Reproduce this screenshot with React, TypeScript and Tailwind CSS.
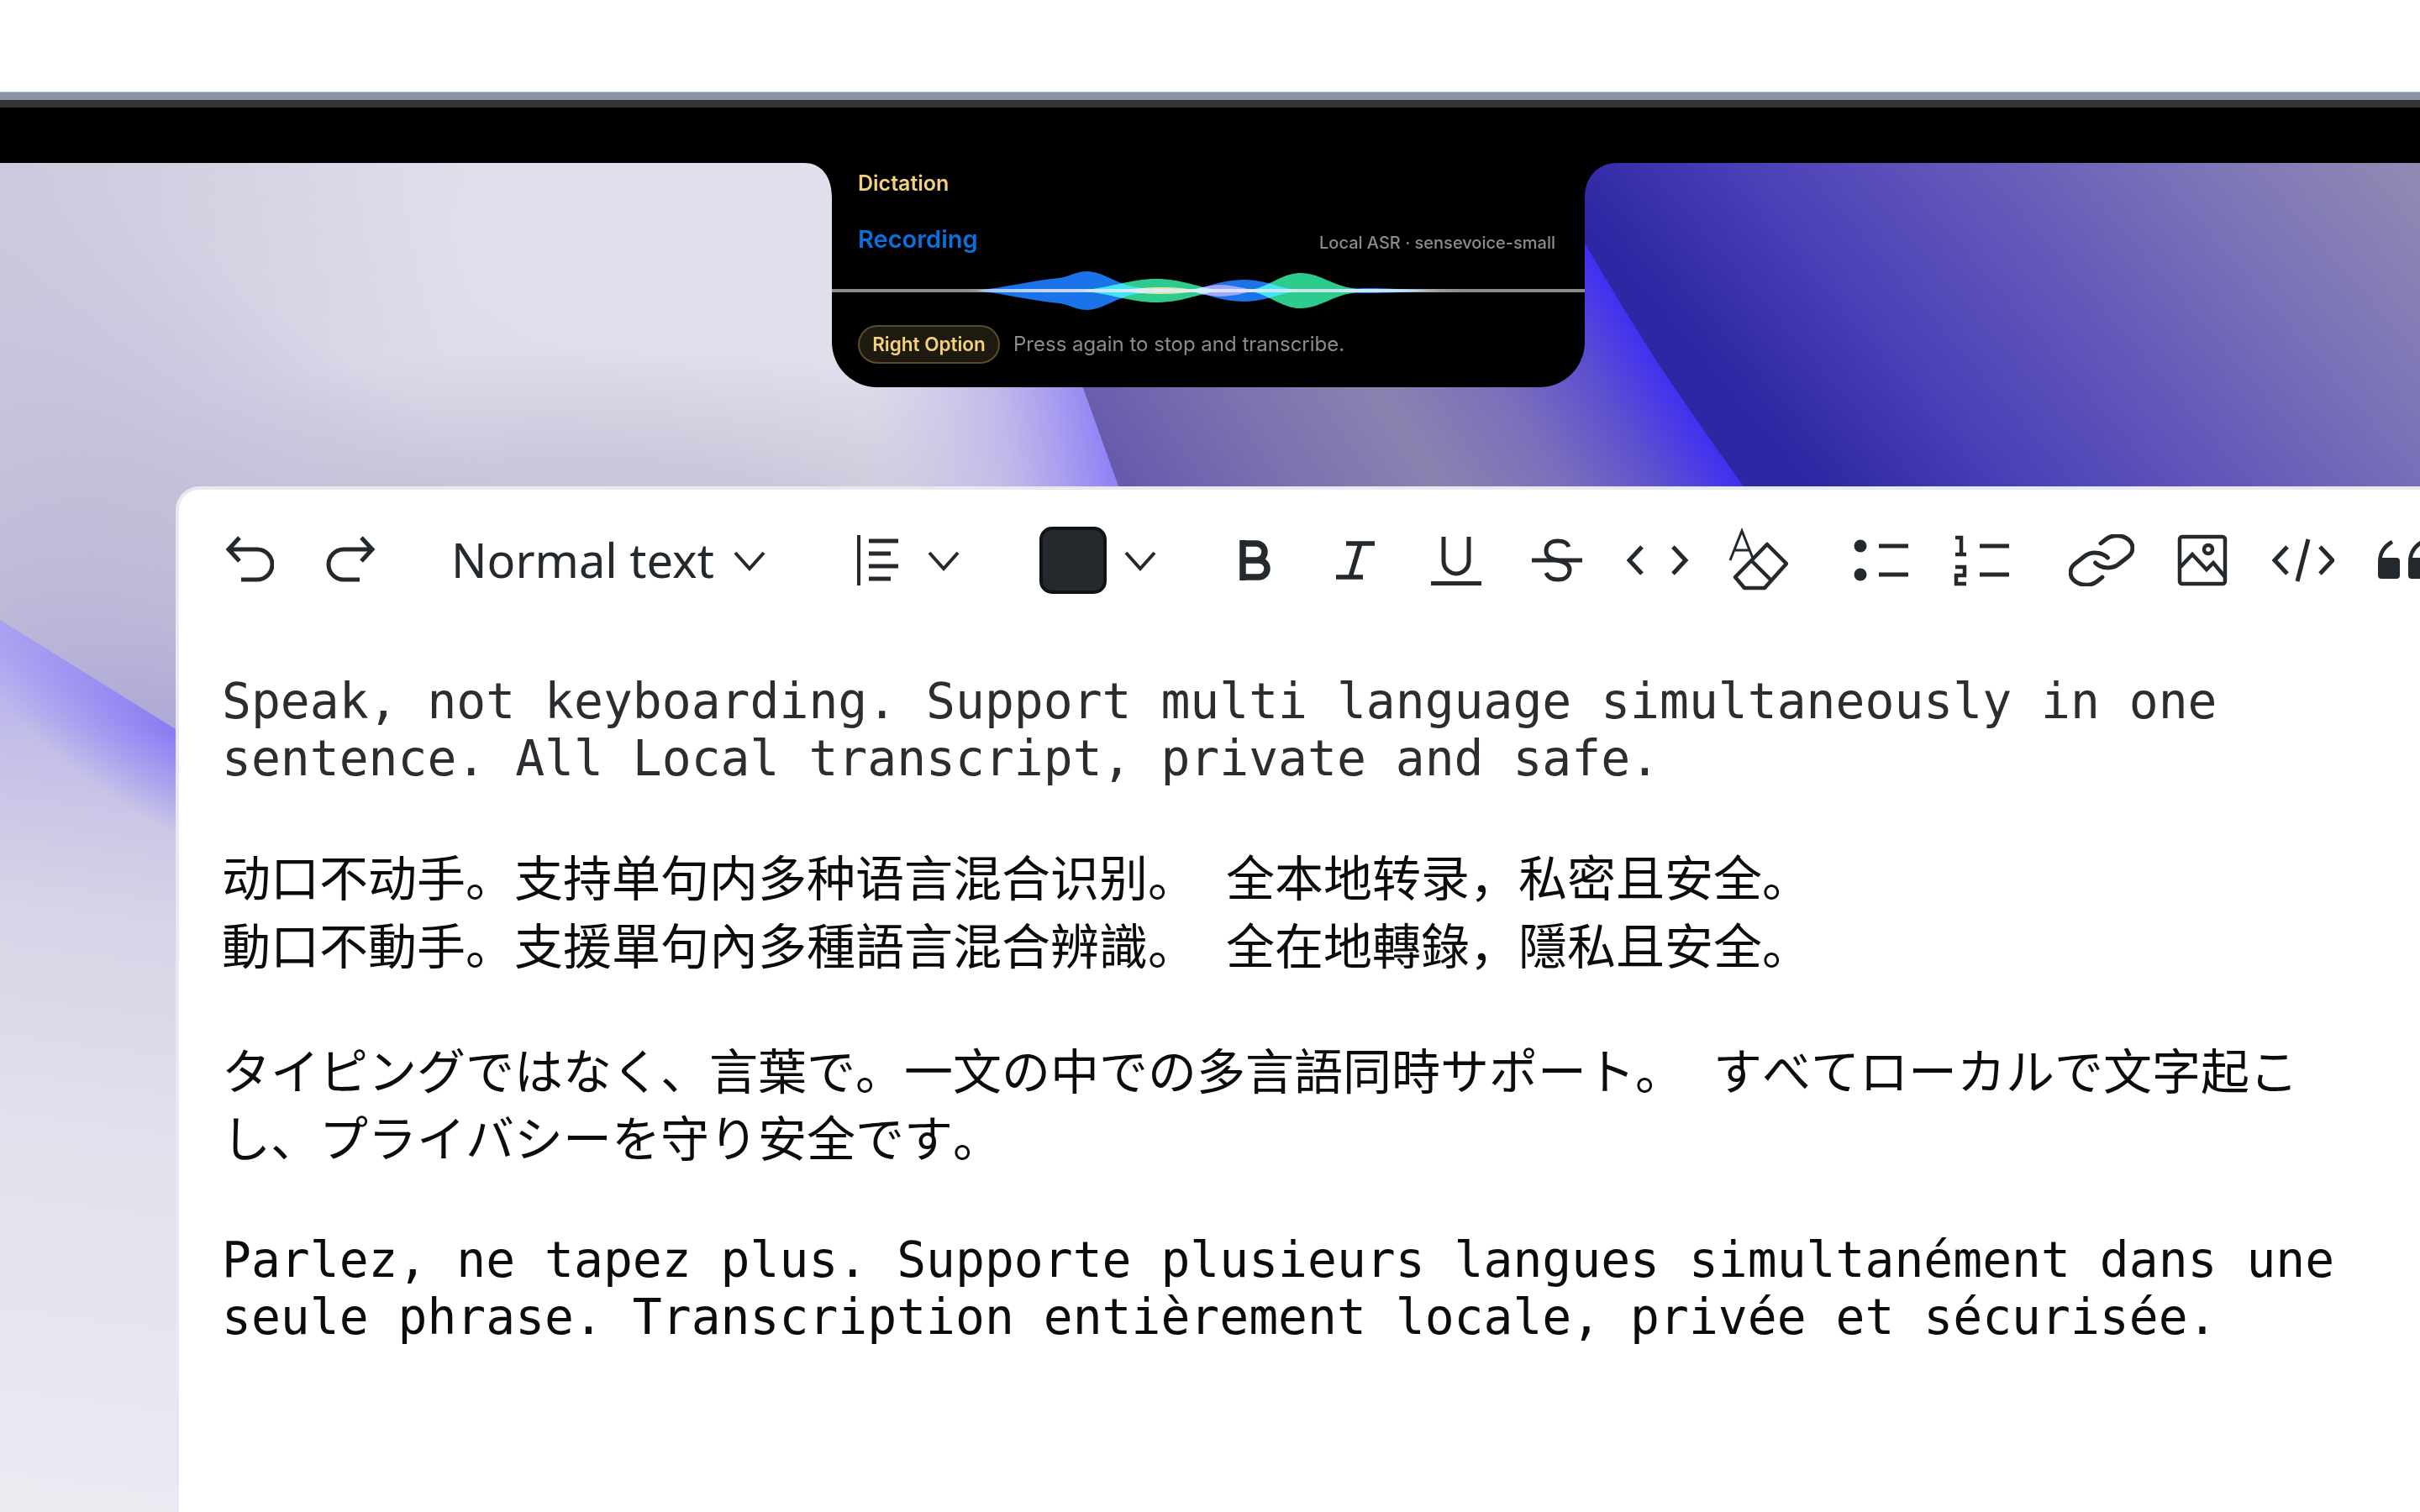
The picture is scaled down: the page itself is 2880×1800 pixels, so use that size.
import React from "react";

const ink = "#24292e";

const Chevron = ({ className = "" }: { className?: string }) => (
  <svg width="38" height="80" viewBox="0 0 38 80" fill="none" stroke={ink} strokeWidth="4" className={className}>
    <path d="M2 31 L19 50 L36 31" />
  </svg>
);

const Wallpaper = () => (
  <svg className="absolute left-0 top-0" width="2880" height="1606" viewBox="0 194 2880 1606">
    <defs>
      <linearGradient id="lilac" gradientUnits="userSpaceOnUse" x1="100" y1="850" x2="520" y2="250">
        <stop offset="0" stopColor="#9a94d0" />
        <stop offset="0.3" stopColor="#b6b1d8" />
        <stop offset="0.72" stopColor="#dcdaea" />
        <stop offset="1" stopColor="#e1dfec" />
      </linearGradient>
      <linearGradient id="lilacTop" gradientUnits="userSpaceOnUse" x1="0" y1="194" x2="560" y2="340">
        <stop offset="0" stopColor="#cbc7dc" stopOpacity="0.9" />
        <stop offset="1" stopColor="#cbc7dc" stopOpacity="0" />
      </linearGradient>
      <radialGradient id="lilacShade" gradientUnits="userSpaceOnUse" cx="0" cy="0" r="1" gradientTransform="translate(720 660) scale(720 250)">
        <stop offset="0" stopColor="#c4c1d6" stopOpacity="0.95" />
        <stop offset="0.45" stopColor="#c4c1d6" stopOpacity="0.75" />
        <stop offset="1" stopColor="#c4c1d6" stopOpacity="0" />
      </radialGradient>
      <linearGradient id="rim" gradientUnits="userSpaceOnUse" x1="1040" y1="560" x2="1330" y2="510">
        <stop offset="0" stopColor="#c8c3e6" stopOpacity="0" />
        <stop offset="0.55" stopColor="#bcb4ea" stopOpacity="0.9" />
        <stop offset="1" stopColor="#8a7bf7" />
      </linearGradient>
      <linearGradient id="lower" gradientUnits="userSpaceOnUse" x1="60" y1="750" x2="-80" y2="1800">
        <stop offset="0" stopColor="#aea6f1" />
        <stop offset="0.13" stopColor="#c3bfe8" />
        <stop offset="0.3" stopColor="#d5d3e6" />
        <stop offset="0.55" stopColor="#e1e0ec" />
        <stop offset="1" stopColor="#ebebf2" />
      </linearGradient>
      <radialGradient id="lowerGlow" gradientUnits="userSpaceOnUse" cx="0" cy="0" r="1" gradientTransform="translate(209 868) rotate(32) scale(280 110)">
        <stop offset="0" stopColor="#8577f6" stopOpacity="0.95" />
        <stop offset="1" stopColor="#8577f6" stopOpacity="0" />
      </radialGradient>
      <linearGradient id="middle" gradientUnits="userSpaceOnUse" x1="1463" y1="778" x2="1980" y2="440">
        <stop offset="0" stopColor="#6659ad" />
        <stop offset="0.28" stopColor="#7b72b0" />
        <stop offset="0.52" stopColor="#8a82b0" />
        <stop offset="0.72" stopColor="#7a6fbb" />
        <stop offset="0.88" stopColor="#5c4fd0" />
        <stop offset="1" stopColor="#4230f0" />
      </linearGradient>
      <linearGradient id="right" gradientUnits="userSpaceOnUse" x1="2050" y1="450" x2="2750" y2="-150">
        <stop offset="0" stopColor="#2e26a2" />
        <stop offset="0.2" stopColor="#4a40b8" />
        <stop offset="0.42" stopColor="#6459b9" />
        <stop offset="0.62" stopColor="#7a72b8" />
        <stop offset="0.86" stopColor="#908bb3" />
      </linearGradient>
    </defs>
    <rect x="0" y="194" width="2880" height="1606" fill="url(#lilac)" />
    <rect x="0" y="194" width="1400" height="700" fill="url(#lilacTop)" />
    <rect x="0" y="380" width="1440" height="560" fill="url(#lilacShade)" />
    <path d="M1000 440 H1281 L1332 579 V620 H1000 Z" fill="url(#rim)" />
    <path d="M0 738 L209 868 L700 1100 V1800 H0 Z" fill="url(#lower)" />
    <path d="M0 738 L209 868 L700 1100 V1800 H0 Z" fill="url(#lowerGlow)" />
    <path d="M1192 194 H2100 V620 H1346 Z" fill="url(#middle)" />
    <path d="M1886 290 L1934 370 L1976 437 L2033 520 L2075 579 L2100 620 H2880 V194 H1880 Z" fill="url(#right)" />
  </svg>
);

const Wave = () => (
  <svg width="896" height="60" viewBox="0 0 896 60" className="block mt-[9px]">
    <defs>
      <linearGradient id="core" x1="0" y1="0" x2="1" y2="0">
        <stop offset="0" stopColor="#d8e2f5" stopOpacity="0" />
        <stop offset="0.15" stopColor="#d8e2f5" stopOpacity="0.65" />
        <stop offset="0.85" stopColor="#d8e8f5" stopOpacity="0.65" />
        <stop offset="1" stopColor="#d8e2f5" stopOpacity="0" />
      </linearGradient>
    </defs>
    <rect x="0" y="28" width="896" height="4" fill="#8a8a8a" />
    <g className="mix-blend-screen">
      <path fill="#1a73e8" className="mix-blend-screen" d="M172 30 C205 26 240 18 270 15 C284 13 290 7 304 7 C322 7 338 22 362 26 C375 28 395 29 410 30 C395 31 375 32 362 34 C338 38 322 53 304 53 C290 53 284 47 270 45 C240 42 205 34 172 30 Z" />
      <path fill="#1a73e8" className="mix-blend-screen" d="M425 30 C445 26 465 17 490 17 C515 17 530 26 555 30 C530 34 515 43 490 43 C465 43 445 34 425 30 Z" />
      <path fill="#1a73e8" className="mix-blend-screen" d="M600 30 C625 25 660 27 710 30 C660 33 625 35 600 30 Z" />
      <path fill="#2ecb8e" className="mix-blend-screen" d="M295 30 C330 27 355 16 386 16 C417 16 435 26 462 30 C435 34 417 44 386 44 C355 44 330 33 295 30 Z" />
      <path fill="#2ecb8e" className="mix-blend-screen" d="M495 30 C520 26 535 9 558 9 C581 9 596 25 625 28 C650 29 680 29.5 720 30 C680 30.5 650 31 625 32 C596 35 581 51 558 51 C535 51 520 34 495 30 Z" />
      <path fill="#9a5cf0" className="mix-blend-screen" d="M420 30 C440 27 450 23 462 23 C475 23 490 27 505 30 C490 33 475 37 462 37 C450 37 440 33 420 30 Z" />
      <path fill="#d07a40" className="mix-blend-screen" d="M340 30 C365 27 375 26 395 26 C410 26 425 28 440 30 C425 32 410 34 395 34 C375 34 365 33 340 30 Z" />
    </g>
    <rect x="160" y="28" width="590" height="4" fill="url(#core)" />
  </svg>
);

const Notch = () => (
  <div className="relative ml-[990px] w-[896px] h-[267px] bg-black rounded-b-[54px] pl-[31px] pt-[10px] font-['Inter',sans-serif]">
    <svg className="absolute top-0 left-[-33px]" width="33" height="41" viewBox="0 0 33 41">
      <path d="M0 0 H33 V41 C33 18 22 0 0 0 Z" fill="#000" />
    </svg>
    <svg className="absolute top-0 right-[-39px]" width="39" height="41" viewBox="0 0 39 41">
      <path d="M39 0 H0 V41 C0 18 14 0 39 0 Z" fill="#000" />
    </svg>
    <div className="text-[25px] leading-[28px] font-semibold text-[#f3cf80]">Dictation</div>
    <div className="flex items-center justify-between mt-[33px] pr-[35px] h-[40px]">
      <span className="text-[29px] font-semibold text-[#0b6fdc]">Recording</span>
      <span className="text-[20px] font-medium text-[#8c8c8c] mt-[8px]">Local ASR · sensevoice-small</span>
    </div>
    <div className="-ml-[31px] pt-[2px]">
      <Wave />
    </div>
    <div className="flex items-center gap-[16px] mt-[11px]">
      <span className="flex items-center justify-center w-[169px] h-[46px] rounded-full border-2 border-[#5b4c2b] bg-[#1e1a10] text-[22.5px] font-semibold text-[#f4d27c]">
        Right Option
      </span>
      <span className="text-[24px] text-[#8c8c8c]">Press again to stop and transcribe.</span>
    </div>
  </div>
);

const Toolbar = () => (
  <div className="flex items-center h-[80px] pl-[55px]">
    <svg width="58" height="80" viewBox="0 0 58 80" fill="none" stroke={ink} strokeWidth="5">
      <path d="M17 13 L4 27 L17 41 M4 27 H38 A18 18 0 0 1 38 63 H19" />
    </svg>
    <svg width="60" height="80" viewBox="0 0 60 80" fill="none" stroke={ink} strokeWidth="5" className="ml-[61px]">
      <path d="M43 13 L56 27 L43 41 M56 27 H22 A18 18 0 0 0 22 63 H41" />
    </svg>
    <span className="ml-[90px] w-[311px] text-[56px] leading-[78px] pb-[2px] font-['Noto_Sans',sans-serif] text-[#24292e] whitespace-nowrap">
      Normal text
    </span>
    <Chevron className="ml-[25px]" />
    <svg width="52" height="80" viewBox="0 0 52 80" fill="none" stroke={ink} className="ml-[108px]">
      <path d="M3 10 V70" strokeWidth="4" />
      <path d="M15 17 H50 M15 32 H41 M15 47 H50 M15 62 H41" strokeWidth="5" />
    </svg>
    <Chevron className="ml-[33px]" />
    <div className="ml-[95px] w-[80px] h-[80px] rounded-[15px] border-4 border-[#111315] bg-[#24292e]" />
    <Chevron className="ml-[21px]" />
    <svg width="37" height="80" viewBox="0 0 37 80" fill="none" stroke={ink} strokeWidth="7.5" className="ml-[99px]">
      <path d="M4 20 H20 A10 10 0 0 1 20 40 H4 M20 40 H23 A10 10 0 0 1 23 60 H4 M4 16 V64" />
    </svg>
    <svg width="46" height="80" viewBox="0 0 46 80" fill="none" stroke={ink} strokeWidth="5.5" className="ml-[78px]">
      <path d="M12 20 H46 M0 60 H32 M29 20 L17 60" />
    </svg>
    <svg width="60" height="80" viewBox="0 0 60 80" fill="none" stroke={ink} strokeWidth="5" className="ml-[67px]">
      <path d="M15 12 V41 A15 15 0 0 0 45 41 V12" />
      <path d="M0 67.5 H60" />
    </svg>
    <svg width="60" height="80" viewBox="0 0 60 80" fill="none" stroke={ink} strokeWidth="5" className="ml-[60px]">
      <path d="M44 24 C42 18 37 17 31 17 C22 17 17 22 17 29 C17 35 21 38 30 40 C40 42 45 45 45 51 C45 59 39 63 31 63 C24 63 19 60 17 55" />
      <path d="M0 40 H60" />
    </svg>
    <svg width="75" height="80" viewBox="0 0 75 80" fill="none" stroke={ink} strokeWidth="5" className="ml-[52px]">
      <path d="M19 24 L4 40 L19 56 M56 24 L71 40 L56 56" />
    </svg>
    <svg width="72" height="80" viewBox="0 0 72 80" fill="none" stroke={ink} className="ml-[46px]">
      <path d="M3 40 L17 5 L31 40 M9 28 H26" strokeWidth="3" />
      <path d="M47 21 L70 44 L44 73 H20 L9 60 Z M28 40 L51 63" strokeWidth="4.5" strokeLinejoin="round" />
    </svg>
    <svg width="65" height="80" viewBox="0 0 65 80" stroke={ink} fill="none" strokeWidth="5" className="ml-[78px]">
      <circle cx="8" cy="23" r="7.5" fill={ink} stroke="none" />
      <circle cx="8" cy="57" r="7.5" fill={ink} stroke="none" />
      <path d="M30 23 H65 M30 57 H65" />
    </svg>
    <svg width="66" height="80" viewBox="0 0 66 80" stroke={ink} fill="none" className="ml-[54px]">
      <path d="M2 13 H9 V33 M2 33 H15 M2 48 H13 V58 H3 V68 H15" strokeWidth="4.5" />
      <path d="M31 23 H66 M31 57 H66" strokeWidth="5" />
    </svg>
    <svg width="78" height="62" viewBox="1.5 1.5 21 21" fill="none" stroke={ink} preserveAspectRatio="none" className="ml-[71px]">
      <path vectorEffect="non-scaling-stroke" strokeWidth="5" strokeLinecap="round" d="M10 13a5 5 0 0 0 7.54.54l3-3a5 5 0 0 0-7.07-7.07l-1.72 1.71" />
      <path vectorEffect="non-scaling-stroke" strokeWidth="5" strokeLinecap="round" d="M14 11a5 5 0 0 0-7.54-.54l-3 3a5 5 0 0 0 7.07 7.07l1.71-1.71" />
    </svg>
    <svg width="60" height="80" viewBox="0 0 60 80" fill="none" stroke={ink} strokeWidth="4.5" className="ml-[51px]">
      <rect x="3" y="12" width="54" height="56" rx="3" />
      <circle cx="37" cy="27" r="5" />
      <path d="M4 48 L18 33 L35 51 L43 43 L57 60" />
    </svg>
    <svg width="74" height="80" viewBox="0 0 74 80" fill="none" stroke={ink} strokeWidth="5" className="ml-[53px]">
      <path d="M18 24 L3 40 L18 56 M43 15 L30 65 M57 24 L72 40 L57 56" />
    </svg>
    <svg width="72" height="80" viewBox="0 0 72 80" fill={ink} className="ml-[52px] shrink-0">
      <path d="M0 42 C0 30 6 21 16 16 L18 20 C10 25 6 31 5 37 H22 A4 4 0 0 1 26 41 V58 A4 4 0 0 1 22 62 H4 A4 4 0 0 1 0 58 Z" />
      <path d="M36 42 C36 30 42 21 52 16 L54 20 C46 25 42 31 41 37 H58 A4 4 0 0 1 62 41 V58 A4 4 0 0 1 58 62 H40 A4 4 0 0 1 36 58 Z" />
    </svg>
  </div>
);

const Editor = () => (
  <div className="ml-[209px] mt-[118px] w-[2800px] flex-1 bg-white rounded-tl-[28px] border-l-4 border-t-4 border-[#e6e9ef] pt-[44px]">
    <Toolbar />
    <div className="mt-[95px] pl-[51px] w-[2570px] text-[58px] [font-kerning:none] font-['DejaVu_Sans_Mono','Noto_Sans_CJK_SC',monospace]">
      <p className="leading-[67.6px] text-[#2b2d30]">
        Speak, not keyboarding. Support multi language simultaneously in one sentence. All Local transcript, private and safe.
      </p>
      <p className="mt-[70px] leading-[81px] text-[#0c0c0c]">
        动口不动手。支持单句内多种语言混合识别。 全本地转录，私密且安全。
        <br />
        動口不動手。支援單句內多種語言混合辨識。 全在地轉錄，隱私且安全。
      </p>
      <p className="mt-[68px] leading-[80px] text-[#0c0c0c]">
        タイピングではなく、言葉で。一文の中での多言語同時サポート。 すべてローカルで文字起こし、プライバシーを守り安全です。
      </p>
      <p className="mt-[70px] leading-[67.6px] text-[#0c0c0c]">
        Parlez, ne tapez plus. Supporte plusieurs langues simultanément dans une seule phrase. Transcription entièrement locale, privée et sécurisée.
      </p>
    </div>
  </div>
);

const App = () => {
  return (
    <div className="w-[2880px] h-[1800px] overflow-hidden bg-white flex flex-col">
      <div className="h-[109px] shrink-0 bg-white" />
      <div className="h-[10px] shrink-0 bg-[#8794a3] border-t border-[#b9c3cc]" />
      <div className="h-[9px] shrink-0 bg-[#333333]" />
      <div className="h-[66px] shrink-0 bg-black" />
      <div className="relative flex-1 flex flex-col overflow-hidden">
        <Wallpaper />
        <div className="relative flex-1 flex flex-col">
          <Notch />
          <Editor />
        </div>
      </div>
    </div>
  );
};

export default App;
